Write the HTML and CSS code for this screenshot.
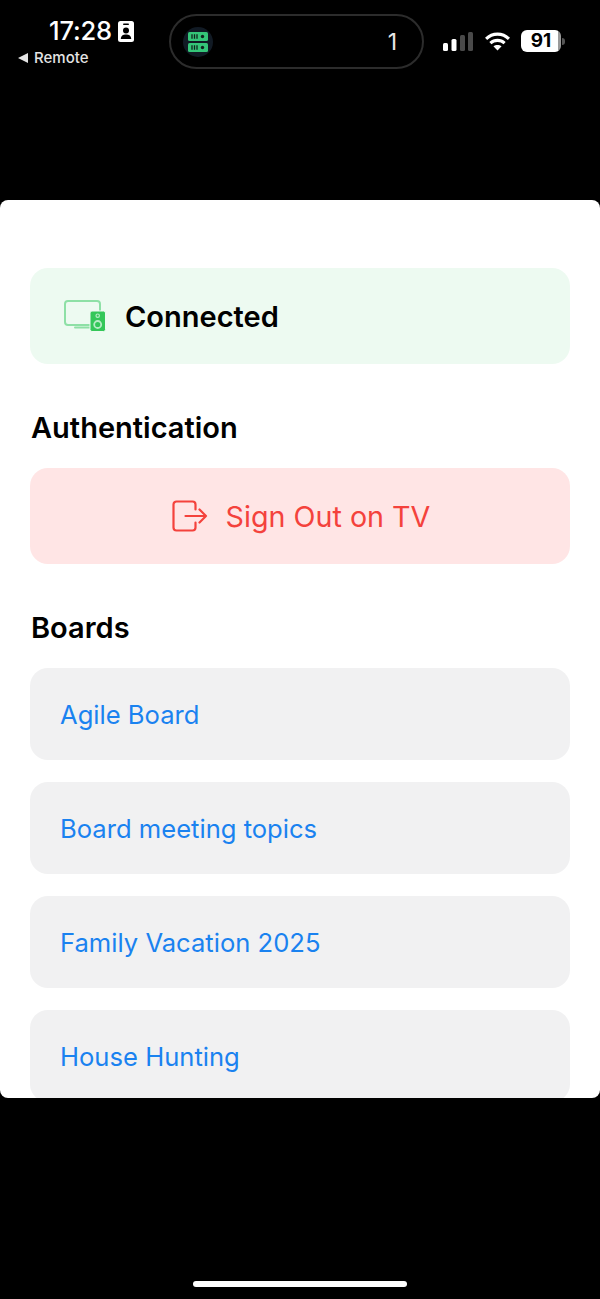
FILE: index.html
```html
<!DOCTYPE html>
<html lang="en">
<head>
  <meta charset="UTF-8">
  <meta name="viewport" content="width=device-width, initial-scale=1.0">
  <title>Remote</title>
  <link rel="stylesheet" href="styles.css">
</head>
<body>

<div class="phone">
  <div class="status-bar">
    <div class="status-left">
      <div class="clock">
        <span class="time">17:28</span>
        <svg class="id-icon" width="16" height="21" viewBox="0 0 16 21">
          <rect x="0" y="0" width="16" height="21" rx="2.5" fill="#fff"/>
          <rect x="5" y="2.5" width="6" height="1.6" rx="0.8" fill="#000"/>
          <circle cx="8" cy="9.5" r="3" fill="#000"/>
          <path d="M2.8 18c0-3.2 2.2-4.6 5.2-4.6s5.2 1.4 5.2 4.6z" fill="#000"/>
        </svg>
      </div>
      <div class="back-link"><span class="back-arrow"></span>Remote</div>
    </div>

    <div class="island">
      <div class="island-badge">
        <svg width="20" height="20" viewBox="0 0 20 20">
          <rect x="0" y="0" width="20" height="9" rx="1.500" fill="#34c578"/>
          <rect x="0" y="11" width="20" height="9" rx="1.500" fill="#34c578"/>
          <path d="M4 2.300v4.400M6.500 2.300v4.400M9 2.300v4.400M4 13.300v4.400M6.500 13.300v4.400M9 13.300v4.400" stroke="#10231c" stroke-width="1.300"/>
          <circle cx="14.500" cy="4.500" r="1.700" fill="#10231c"/>
          <circle cx="14.500" cy="15.500" r="1.700" fill="#10231c"/>
        </svg>
      </div>
      <span class="island-count">1</span>
    </div>

    <div class="status-right">
      <svg width="30" height="19" viewBox="0 0 30 19">
        <rect x="0" y="11" width="5" height="8" rx="1.500" fill="#fff"/>
        <rect x="8.500" y="7" width="5" height="12" rx="1.500" fill="#fff"/>
        <rect x="17" y="3" width="5" height="16" rx="1.500" fill="#4a4a4a"/>
        <rect x="25" y="0" width="5" height="19" rx="1.500" fill="#4a4a4a"/>
      </svg>
      <svg class="wifi" width="27" height="19" viewBox="0 0 27 20" fill="none" stroke="#fff" stroke-width="3.200">
        <path d="M1.500 7.200C8.200 .6 18.800 .6 25.500 7.200"/>
        <path d="M6 11.800c4.300-4 10.700-4 15 0"/>
        <path d="M13.500 19.500l-4.300-4.400c2.500-2 6.100-2 8.600 0z" fill="#fff" stroke="none"/>
      </svg>
      <div class="battery">
        <span class="battery-body">91</span>
        <span class="battery-tip"></span>
      </div>
    </div>
  </div>

  <div class="sheet">
    <div class="connected-card">
      <svg class="tv-icon" width="42" height="32" viewBox="0 0 42 32" fill="none">
        <rect x="1" y="1" width="35" height="24" rx="3" stroke="#8ee0a6" stroke-width="2"/>
        <path d="M11 27.500h15" stroke="#8ee0a6" stroke-width="2" stroke-linecap="round"/>
        <rect x="26" y="11" width="15.500" height="20.500" rx="2" fill="#34c759" stroke="#edfaf1" stroke-width="1"/>
        <circle cx="33.700" cy="15.700" r="1.700" stroke="#b6ecc5" stroke-width="1.200"/>
        <circle cx="33.700" cy="24.500" r="3.500" stroke="#b6ecc5" stroke-width="1.800"/>
      </svg>
      <span class="connected-label">Connected</span>
    </div>

    <h2 class="section-title">Authentication</h2>
    <button class="sign-out">
      <svg width="36" height="32" viewBox="0 0 36 32" fill="none" stroke="#f4423c" stroke-width="2.200" stroke-linecap="round" stroke-linejoin="round">
        <path d="M23.500 9.500V4.500a3 3 0 0 0-3-3H4.500a3 3 0 0 0-3 3v23a3 3 0 0 0 3 3h16a3 3 0 0 0 3-3v-5"/>
        <path d="M13.500 16h20.500M27.500 9.500l6.500 6.500-6.500 6.500"/>
      </svg>
      <span>Sign Out on TV</span>
    </button>

    <h2 class="section-title">Boards</h2>
    <div class="board-list">
      <div class="board">Agile Board</div>
      <div class="board">Board meeting topics</div>
      <div class="board">Family Vacation 2025</div>
      <div class="board">House Hunting</div>
    </div>
  </div>

  <div class="home-bar"></div>
</div>

</body>
</html>
```

FILE: styles.css
```css
* {
  box-sizing: border-box;
}
html, body {
  margin: 0;
  padding: 0;
  background-color: #000;
}
body {
  font-family: Inter, "Liberation Sans", sans-serif;
}
.phone {
  width: 600px;
  height: 1299px;
  display: flex;
  flex-direction: column;
  overflow: hidden;
}

/* status bar */
.status-bar {
  height: 200px;
  flex-shrink: 0;
  display: flex;
  align-items: flex-start;
  color: #fff;
}
.status-left {
  width: 169px;
  padding: 19px 0 0 18px;
}
.clock {
  display: flex;
  align-items: center;
  padding-left: 31px;
  height: 24px;
}
.time {
  font-size: 25.500px;
  font-weight: 500;
  line-height: 24px;
  letter-spacing: -0.2px;
}
.id-icon {
  margin-left: 6px;
}
.back-link {
  display: flex;
  align-items: center;
  margin-top: 6px;
  font-size: 15px;
  font-weight: 500;
  line-height: 18px;
  color: #e4e4e4;
}
.back-arrow {
  width: 0;
  height: 0;
  margin-right: 6px;
  border-top: 5px solid transparent;
  border-bottom: 5px solid transparent;
  border-right: 10px solid #e4e4e4;
}
.island {
  width: 255px;
  height: 55px;
  margin-top: 14px;
  padding: 0 25px 0 12px;
  display: flex;
  align-items: center;
  justify-content: space-between;
  border: 2px solid #2c2c2c;
  border-radius: 28px;
}
.island-badge {
  width: 30px;
  height: 30px;
  border-radius: 50%;
  background-color: #111a24;
  display: flex;
  align-items: center;
  justify-content: center;
}
.island-count {
  font-size: 23px;
  color: #e8e8e8;
}
.status-right {
  display: flex;
  align-items: center;
  margin-top: 30px;
  margin-left: 19px;
}
.wifi {
  margin-left: 11px;
}
.battery {
  display: flex;
  align-items: center;
  margin-left: 10px;
}
.battery-body {
  width: 40px;
  height: 22px;
  border-radius: 6px;
  background: linear-gradient(to right, #fff 92%, #9a9a9a 92%);
  color: #000;
  font-size: 19px;
  font-weight: 700;
  line-height: 22px;
  text-align: center;
}
.battery-tip {
  width: 3px;
  height: 7px;
  margin-left: 1px;
  border-radius: 0 3px 3px 0;
  background-color: #555;
}

/* sheet */
.sheet {
  height: 898px;
  flex-shrink: 0;
  padding: 68px 30px 0;
  background-color: #fff;
  border-radius: 8px;
  overflow: hidden;
}
.connected-card {
  height: 96px;
  padding-left: 34px;
  display: flex;
  align-items: center;
  background-color: #edfaf1;
  border-radius: 18px;
}
.tv-icon {
  margin-right: 19px;
}
.connected-label {
  font-size: 29px;
  font-weight: 600;
  color: #000;
}
.section-title {
  margin: 46px 0 22px;
  padding-left: 1px;
  font-size: 29px;
  font-weight: 600;
  line-height: 36px;
  color: #000;
}
.sign-out {
  width: 100%;
  height: 96px;
  padding: 0 0 0 2px;
  display: flex;
  align-items: center;
  justify-content: center;
  gap: 18px;
  border: none;
  border-radius: 18px;
  background-color: #ffe5e5;
  color: #f4423c;
  font-family: inherit;
  font-size: 28.700px;
}
.board-list {
  display: flex;
  flex-direction: column;
  gap: 22px;
}
.board {
  height: 92px;
  flex-shrink: 0;
  padding-left: 30px;
  display: flex;
  align-items: center;
  background-color: #f1f1f2;
  border-radius: 18px;
  color: #1a82f0;
  font-size: 25.600px;
}
.home-bar {
  width: 214px;
  height: 6px;
  margin: 183px auto 0;
  flex-shrink: 0;
  border-radius: 3px;
  background-color: #fff;
}
```
